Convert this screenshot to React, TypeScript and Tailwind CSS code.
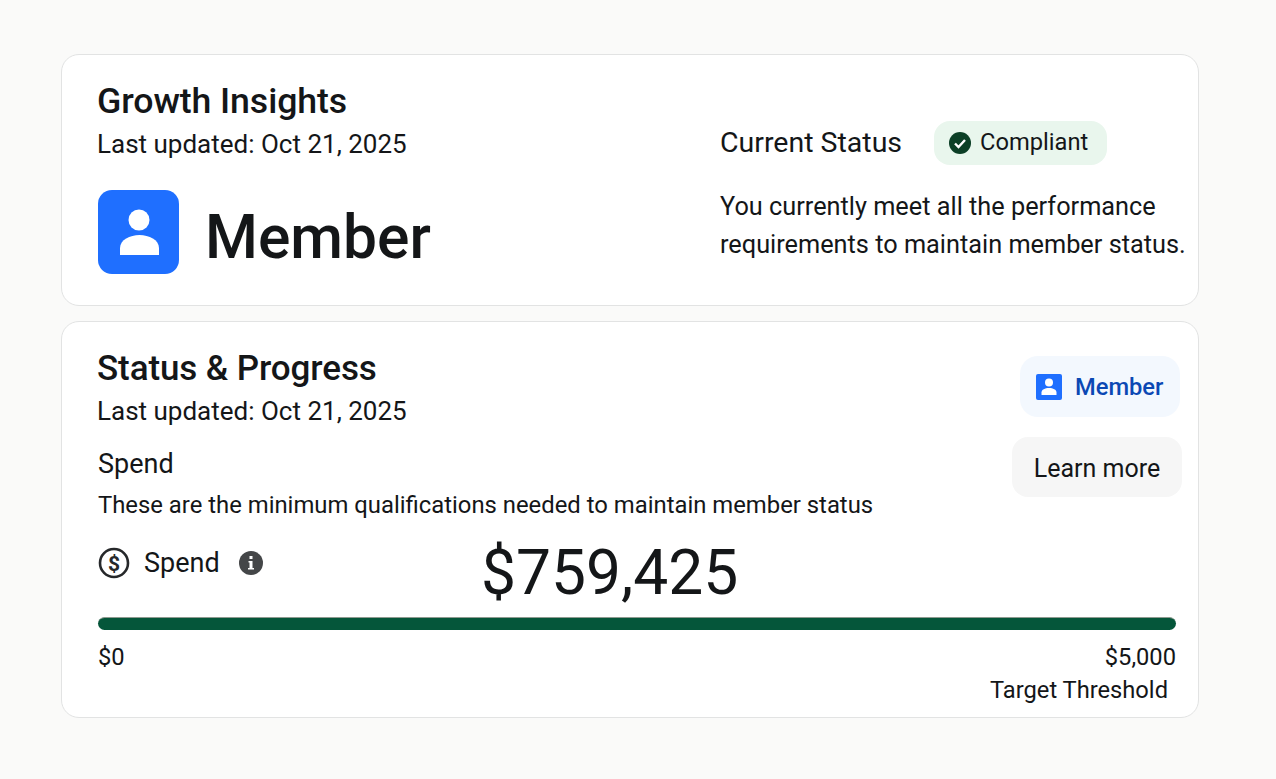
function Person({ className }: { className?: string }) {
  return (
    <svg viewBox="0 0 81 84" className={className}>
      <rect x="0" y="0" width="81" height="84" rx="14" fill="#1f6fff" />
      <circle cx="41" cy="30" r="10.500" fill="#fff" />
      <path d="M22 65V58c0-8 10-13 19.500-13S61 50 61 58v7z" fill="#fff" />
    </svg>
  );
}

function SmallPerson({ className }: { className?: string }) {
  return (
    <svg viewBox="0 0 26 26" className={className}>
      <rect x="0" y="0" width="26" height="26" rx="2" fill="#1f6fff" />
      <circle cx="13" cy="8.500" r="4" fill="#fff" />
      <path d="M5.500 21v-2.500c0-3 3.500-4.500 7.500-4.500s7.500 1.500 7.500 4.500V21z" fill="#fff" />
    </svg>
  );
}

export default function App() {
  return (
    <div className="min-h-[779px] bg-[#fafaf9] px-[61px] pt-[54px] font-['Roboto',sans-serif] text-[#141618]">
      <section className="flex h-[252px] w-[1138px] rounded-[18px] border border-[#e2e3e3] bg-white pl-9">
        <div className="w-[622px] pt-[23px]">
          <h1 className="-ml-px text-[35.700px] leading-[46px] font-medium tracking-[-0.1px]">Growth Insights</h1>
          <p className="-ml-px text-[26px] leading-[40px]">Last updated: Oct 21, 2025</p>
          <div className="mt-[26px] flex items-center gap-[26px]">
            <Person className="h-[84px] w-[81px]" />
            <span className="mt-[12px] text-[60.500px] leading-[72px] font-medium">Member</span>
          </div>
        </div>
        <div className="pt-[66px]">
          <div className="flex items-center gap-8">
            <span className="text-[28.500px] leading-[44px]">Current Status</span>
            <span className="flex h-[44px] w-[173px] items-center gap-[9px] rounded-[16px] bg-[#e9f6ed] pl-[15px] text-[23.700px]">
              <svg viewBox="0 0 22 22" className="h-[22px] w-[22px]">
                <circle cx="11" cy="11" r="11" fill="#0c3f26" />
                <path d="M6 11.500l3.500 3.500L16 8" fill="none" stroke="#fff" strokeWidth="2.400" />
              </svg>
              Compliant
            </span>
          </div>
          <p className="mt-[23px] whitespace-nowrap text-[25.300px] leading-[38px]">
            You currently meet all the performance
            <br />
            requirements to maintain member status.
          </p>
        </div>
      </section>

      <section className="mt-[15px] flex h-[397px] w-[1138px] flex-col rounded-[18px] border border-[#e2e3e3] bg-white pt-[25px] pr-[22px] pl-9">
        <div className="flex items-start justify-between">
          <div>
            <h2 className="-ml-px text-[35px] leading-[44px] font-medium tracking-[-0.1px]">Status &amp; Progress</h2>
            <p className="-ml-px text-[26px] leading-[41px]">Last updated: Oct 21, 2025</p>
            <p className="mt-[12px] text-[27px] leading-[40px]">Spend</p>
            <p className="text-[23.850px] leading-[42px]">These are the minimum qualifications needed to maintain member status</p>
          </div>
          <div className="-mr-[6px] flex flex-col items-end gap-[20px] pt-[9px]">
            <div className="mr-[2px] flex h-[61px] w-[160px] items-center gap-[13px] rounded-[18px] bg-[#f3f8fe] pl-[16px] text-[23.700px] font-medium text-[#0b48b4]">
              <SmallPerson className="h-[26px] w-[26px]" />
              <span className="pt-[2px]">Member</span>
            </div>
            <div className="flex h-[60px] w-[170px] items-center justify-center rounded-[16px] bg-[#f6f6f6] pt-[3px] text-[25px]">Learn more</div>
          </div>
        </div>

        <div className="mt-[15px] flex items-start">
          <div className="flex h-[60px] w-[383px] items-center pb-4">
            <svg viewBox="0 0 32 32" className="h-[32px] w-[32px]">
              <circle cx="16" cy="16" r="14" fill="none" stroke="#26282a" strokeWidth="2.600" />
              <text x="16" y="23.500" textAnchor="middle" fontSize="21" fontWeight="700" fill="#26282a" fontFamily="Roboto">$</text>
            </svg>
            <span className="ml-[14px] text-[27px]">Spend</span>
            <svg viewBox="0 0 24 24" className="ml-[19px] h-[24px] w-[24px]">
              <circle cx="12" cy="12" r="12" fill="#444648" />
              <rect x="10.500" y="5" width="3" height="3" fill="#fff" />
              <path d="M9.500 10h4v7h1.500v1.500H9V17h1.500v-5.500h-1z" fill="#fff" />
            </svg>
          </div>
          <span className="text-[62.300px] leading-[64px]">$759,425</span>
        </div>

        <div className="mt-[12px] h-[13px] rounded-full border-t border-[#8f9a90] bg-[#05563a]" />
        <div className="mt-[13px] flex justify-between text-[23.700px] leading-[28px]">
          <span>$0</span>
          <span>$5,000</span>
        </div>
        <div className="mt-[5px] pr-[8px] text-right text-[23.700px] leading-[28px]">Target Threshold</div>
      </section>
    </div>
  );
}
